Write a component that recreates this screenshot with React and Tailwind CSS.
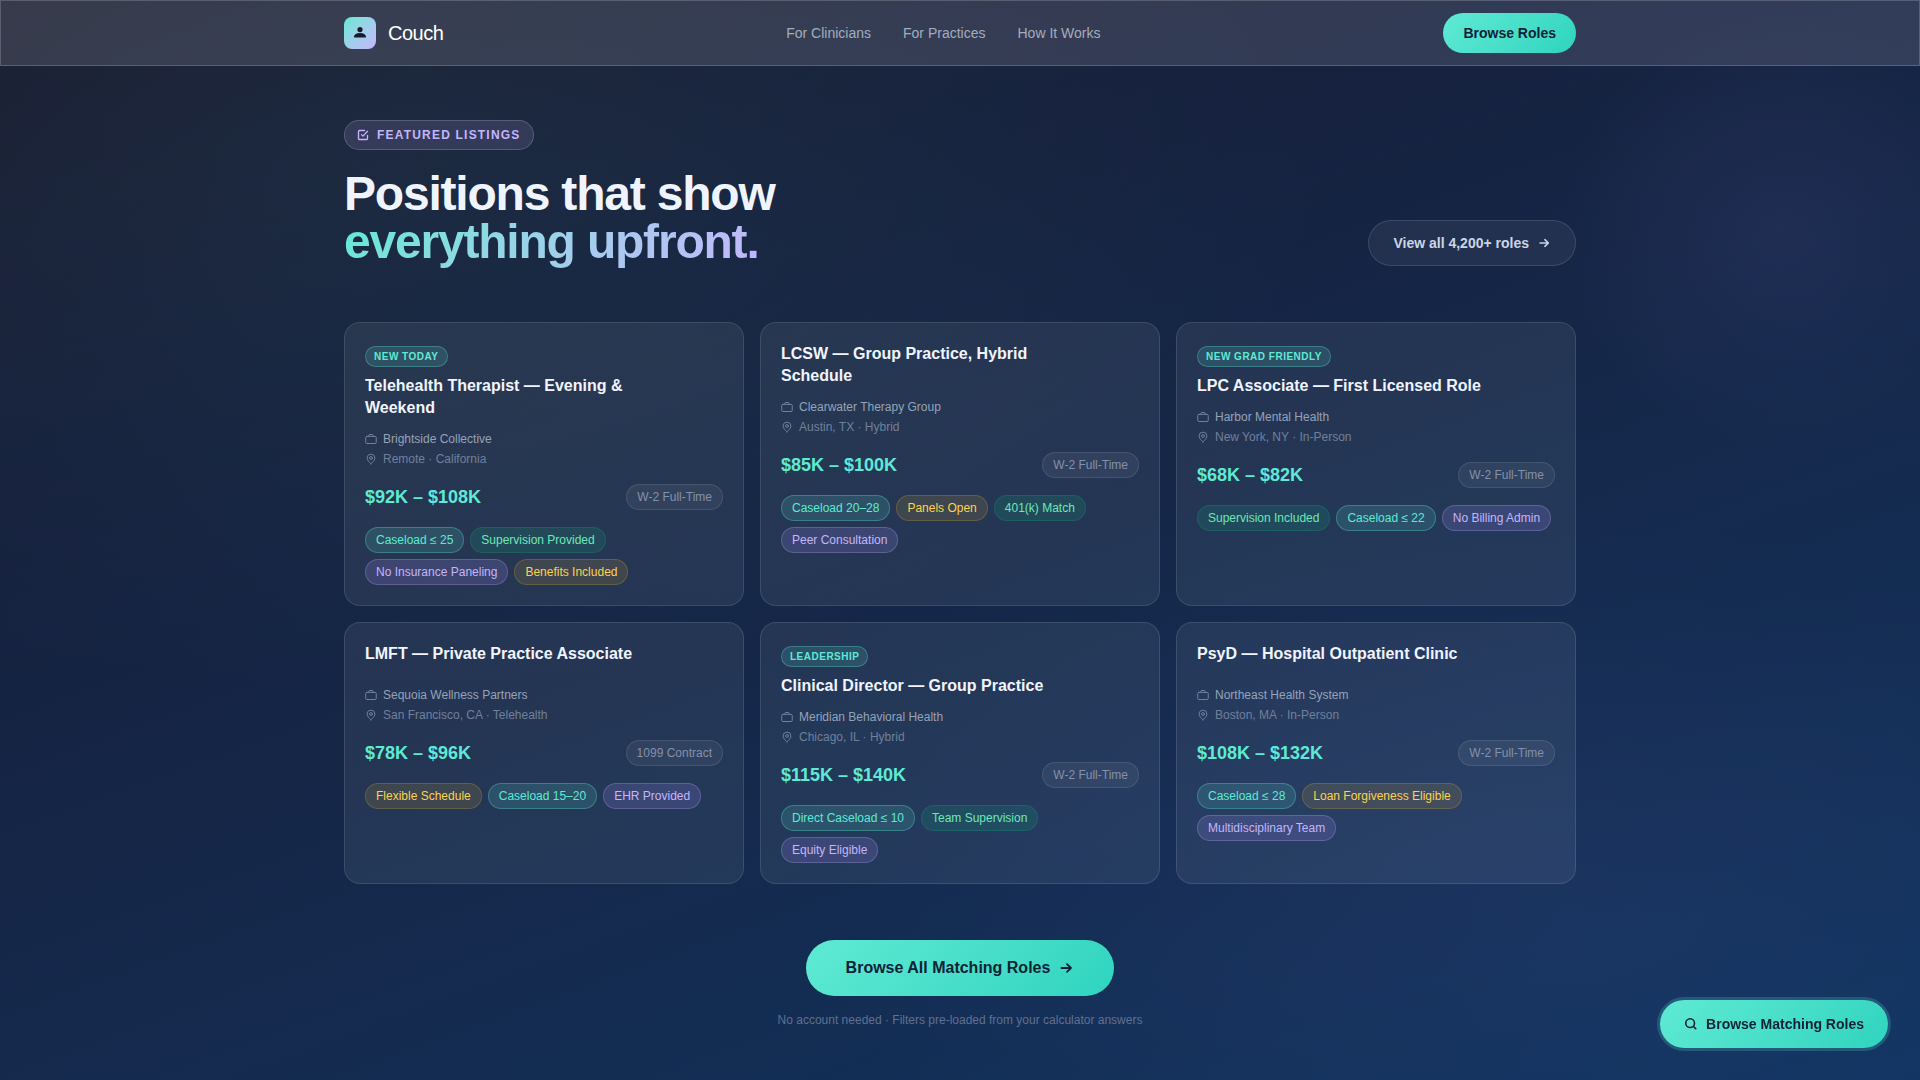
const NAV_LINKS = ['For Clinicians', 'For Practices', 'How It Works'];

const TAG_STYLES = {
  teal: 'bg-[#5eead4]/15 border-[#5eead4]/30 text-[#5eead4]',
  green: 'bg-[#10b981]/15 border-[#10b981]/20 text-[#6ee7b7]',
  purple: 'bg-[#a78bfa]/18 border-[#c4b5fd]/25 text-[#c4b5fd]',
  amber: 'bg-[#fbbf24]/12 border-[#fbbf24]/20 text-[#fcd34d]',
};

const JOBS = [
  {
    badge: 'New Today',
    title: 'Telehealth Therapist — Evening & Weekend',
    org: 'Brightside Collective',
    location: 'Remote · California',
    salary: '$92K – $108K',
    type: 'W-2 Full-Time',
    tags: [['Caseload ≤ 25', 'teal'], ['Supervision Provided', 'green'], ['No Insurance Paneling', 'purple'], ['Benefits Included', 'amber']],
  },
  {
    title: 'LCSW — Group Practice, Hybrid Schedule',
    org: 'Clearwater Therapy Group',
    location: 'Austin, TX · Hybrid',
    salary: '$85K – $100K',
    type: 'W-2 Full-Time',
    tags: [['Caseload 20–28', 'teal'], ['Panels Open', 'amber'], ['401(k) Match', 'green'], ['Peer Consultation', 'purple']],
  },
  {
    badge: 'New Grad Friendly',
    title: 'LPC Associate — First Licensed Role',
    org: 'Harbor Mental Health',
    location: 'New York, NY · In-Person',
    salary: '$68K – $82K',
    type: 'W-2 Full-Time',
    tags: [['Supervision Included', 'green'], ['Caseload ≤ 22', 'teal'], ['No Billing Admin', 'purple']],
  },
  {
    title: 'LMFT — Private Practice Associate',
    org: 'Sequoia Wellness Partners',
    location: 'San Francisco, CA · Telehealth',
    salary: '$78K – $96K',
    type: '1099 Contract',
    tags: [['Flexible Schedule', 'amber'], ['Caseload 15–20', 'teal'], ['EHR Provided', 'purple']],
  },
  {
    badge: 'Leadership',
    title: 'Clinical Director — Group Practice',
    org: 'Meridian Behavioral Health',
    location: 'Chicago, IL · Hybrid',
    salary: '$115K – $140K',
    type: 'W-2 Full-Time',
    tags: [['Direct Caseload ≤ 10', 'teal'], ['Team Supervision', 'green'], ['Equity Eligible', 'purple']],
  },
  {
    title: 'PsyD — Hospital Outpatient Clinic',
    org: 'Northeast Health System',
    location: 'Boston, MA · In-Person',
    salary: '$108K – $132K',
    type: 'W-2 Full-Time',
    tags: [['Caseload ≤ 28', 'teal'], ['Loan Forgiveness Eligible', 'amber'], ['Multidisciplinary Team', 'purple']],
  },
];

function Icon({ size, strokeWidth = 1.8, children }) {
  return (
    <svg
      width={size}
      height={size}
      viewBox="0 0 16 16"
      fill="none"
      stroke="currentColor"
      strokeWidth={strokeWidth}
      strokeLinecap="round"
      strokeLinejoin="round"
      aria-hidden="true"
    >
      {children}
    </svg>
  );
}

function ArrowIcon({ size }) {
  return (
    <Icon size={size}>
      <path d="M3.5 8h9.5M9 4.2L13 8l-4 3.8" />
    </Icon>
  );
}

function Logo() {
  return (
    <a href="#" className="flex items-center gap-3">
      <span className="flex h-8 w-8 items-center justify-center rounded-lg bg-linear-135 from-[#5eead4] to-[#c4b5fd]">
        <svg viewBox="0 0 16 16" className="h-4 w-4 fill-[#1a1a2e]" aria-hidden="true">
          <circle cx="8" cy="4.6" r="2.6" />
          <path d="M2.5 12.4a.6.6 0 0 1-.6-.7C2.3 9.3 4.4 7.9 8 7.9s5.7 1.4 6.1 3.8a.6.6 0 0 1-.6.7z" />
        </svg>
      </span>
      <span className="text-xl tracking-tight text-white">Couch</span>
    </a>
  );
}

function JobCard({ job }) {
  return (
    <article className="rounded-2xl border border-white/11 bg-[#f0f8ff]/7 p-5">
      <div className="mb-3 min-h-8 pr-11">
        {job.badge && (
          <span className="mb-2 inline-block rounded-full border border-[#5eead4]/30 bg-[#5eead4]/15 px-2 py-0.5 text-[10px] leading-[15px] font-bold tracking-wider text-[#5eead4] uppercase">
            {job.badge}
          </span>
        )}
        <h3 className="text-base leading-[22px] font-bold text-[#f0f4ff]">{job.title}</h3>
      </div>
      <div className="mb-4 flex flex-col gap-1 text-xs">
        <div className="flex items-center gap-1.5 text-[#94a3b8]">
          <span className="opacity-70">
            <Icon size={12} strokeWidth={1.3}>
              <rect x="1" y="4.5" width="14" height="9.5" rx="1.5" />
              <path d="M5 4.5v-1A1.5 1.5 0 0 1 6.5 2h3A1.5 1.5 0 0 1 11 3.5v1" />
            </Icon>
          </span>
          <span>{job.org}</span>
        </div>
        <div className="flex items-center gap-1.5 text-[#70809b]">
          <Icon size={12} strokeWidth={1.3}>
            <path d="M8 14.5S2.8 10.3 2.8 6.7a5.2 5.2 0 0 1 10.4 0C13.2 10.3 8 14.5 8 14.5z" />
            <circle cx="8" cy="6.7" r="1.9" />
          </Icon>
          <span>{job.location}</span>
        </div>
      </div>
      <div className="mb-4 flex items-center justify-between">
        <span className="text-lg leading-7 font-bold text-[#5eead4]">{job.salary}</span>
        <span className="rounded-full border border-white/10 bg-white/6 px-2.5 py-1 text-xs text-[#8391aa]">{job.type}</span>
      </div>
      <div className="flex flex-wrap gap-1.5">
        {job.tags.map(([label, tone]) => (
          <span key={label} className={`rounded-full border px-2.5 py-1 text-xs ${TAG_STYLES[tone]}`}>{label}</span>
        ))}
      </div>
    </article>
  );
}

export default function App() {
  return (
    <div className="relative isolate min-h-screen bg-linear-160 from-[#1a1a2e] via-[#16213e] via-30% to-[#0f3460] font-['Liberation_Sans',Arial,sans-serif] text-base">
      {/* soft colour glows behind the page */}
      <div className="absolute inset-0 -z-10 bg-[radial-gradient(ellipse_960px_540px_at_20%_15%,rgba(94,234,212,0.06),transparent),radial-gradient(circle_220px_at_1780px_230px,rgba(167,139,250,0.07),transparent),radial-gradient(ellipse_760px_400px_at_82%_85%,rgba(167,139,250,0.06),transparent)]" />

      <header className="border border-white/18 bg-[#fbf4ff]/12">
        <div className="mx-auto flex max-w-7xl items-center justify-between px-6 py-3">
          <Logo />
          <nav className="flex gap-8 text-sm text-[#a3adbf]">
            {NAV_LINKS.map(label => (
              <a key={label} href="#">{label}</a>
            ))}
          </nav>
          <button className="rounded-full bg-linear-135 from-[#5eead4] to-[#2dd4bf] px-5 py-2.5 text-sm font-bold text-[#0f2235]">
            Browse Roles
          </button>
        </div>
      </header>

      <main className="mx-auto max-w-7xl px-6 pt-[54px] pb-12">
        <div className="mb-14 flex items-end justify-between">
          <div>
            <div className="mb-5 flex w-fit items-center gap-2 rounded-full border border-white/18 bg-[#c4a8fa]/14 px-3 py-1.5 text-xs font-bold tracking-widest text-[#c4b5fd] uppercase">
              <Icon size={12}>
                <path d="M14 8.5v4a1.5 1.5 0 0 1-1.5 1.5h-9A1.5 1.5 0 0 1 2 12.5v-9A1.5 1.5 0 0 1 3.5 2H10" />
                <path d="M6 7.5l2 2L14 3" />
              </Icon>
              Featured Listings
            </div>
            <h1 className="text-5xl leading-none font-bold tracking-tight text-[#f0f4ff]">
              Positions that show
              <br />
              <span className="bg-linear-135 from-[#5eead4] to-[#c4b5fd] bg-clip-text text-transparent">everything upfront.</span>
            </h1>
          </div>
          <a href="#" className="flex items-center gap-2 rounded-full border border-white/12 bg-white/6 px-6 py-3 text-sm font-bold text-[#cbd5e8]">
            View all 4,200+ roles
            <ArrowIcon size={14} />
          </a>
        </div>

        <div className="grid grid-cols-3 gap-4">
          {JOBS.map(job => (
            <JobCard key={job.title} job={job} />
          ))}
        </div>

        <div className="mt-14 flex flex-col items-center">
          <button className="flex items-center gap-2 rounded-full bg-linear-135 from-[#5eead4] to-[#2dd4bf] px-10 py-4 text-base font-bold text-[#0f2235]">
            Browse All Matching Roles
            <ArrowIcon size={16} />
          </button>
          <p className="mt-4 text-xs text-[#5f7090]">No account needed · Filters pre-loaded from your calculator answers</p>
        </div>
      </main>

      <button className="fixed right-8 bottom-8 flex items-center gap-2 rounded-full bg-linear-135 from-[#5eead4] to-[#2dd4bf] px-6 py-3.5 text-sm font-bold text-[#0f2235] ring-3 ring-[#5eead4]/20">
        <Icon size={14}>
          <circle cx="7" cy="7" r="5" />
          <path d="M11 11l2.5 2.5" />
        </Icon>
        Browse Matching Roles
      </button>
    </div>
  );
}
